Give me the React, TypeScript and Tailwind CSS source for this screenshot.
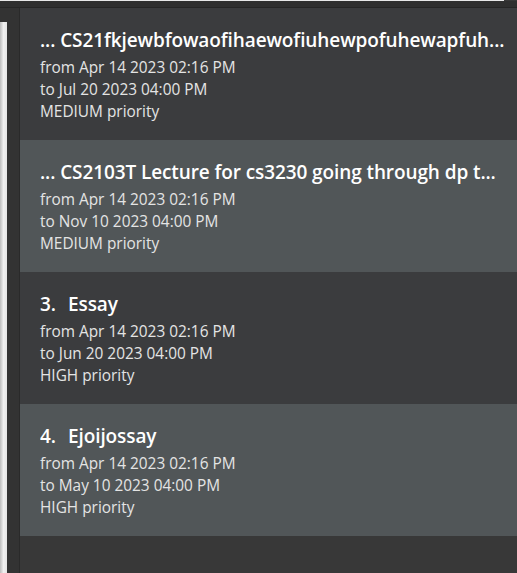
import React from "react";

const cards = [
  { title: "... CS21fkjewbfowaofihaewofiuhewpofuhewapfuh...", from: "from Apr 14 2023 02:16 PM", to: "to Jul 20 2023 04:00 PM", pri: "MEDIUM priority", id: null },
  { title: "... CS2103T Lecture for cs3230 going through dp t...", from: "from Apr 14 2023 02:16 PM", to: "to Nov 10 2023 04:00 PM", pri: "MEDIUM priority", id: null },
  { title: "Essay", from: "from Apr 14 2023 02:16 PM", to: "to Jun 20 2023 04:00 PM", pri: "HIGH priority", id: "3." },
  { title: "Ejoijossay", from: "from Apr 14 2023 02:16 PM", to: "to May 10 2023 04:00 PM", pri: "HIGH priority", id: "4." },
];

export default function App() {
  return (
    <div className="w-[517px] h-[573px] bg-[#383838] flex flex-col overflow-hidden" style={{ fontFamily: '"Open Sans", sans-serif' }}>
      <div className="h-px w-[504px] bg-[#e8e8e8]" />
      <div className="h-[6px] bg-[#2f2f2f]" />
      <div className="h-px bg-[#262626]" />
      <div className="flex flex-1 min-h-0">
        <div className="w-[19px] bg-[#333333] flex flex-col">
          <div className="h-[14px]" />
          <div className="w-[7px] flex-1 bg-gradient-to-r from-[#bdbdbd] via-[#f0f0f0] to-[#e6e6e6]" />
        </div>
        <div className="w-px bg-[#2a2a2a]" />
        <div className="flex-1 flex flex-col">
          {cards.map((c, i) => (
            <div
              key={i}
              className={`h-[132px] pl-[20px] pr-[10px] pt-[19px] ${i % 2 === 0 ? "bg-[#3b3c3e]" : "bg-[#515658]"}`}
            >
              <div className="flex items-baseline text-[19px] leading-[26px] font-semibold text-white whitespace-nowrap overflow-hidden tracking-[-0.1px]">
                {c.id && <span className="w-[28px]">{c.id}</span>}
                <span>{c.title}</span>
              </div>
              <div className="text-[15.4px] leading-[22px] text-[#e4e4e4] mt-[4px]">
                <div>{c.from}</div>
                <div>{c.to}</div>
                <div>{c.pri}</div>
              </div>
            </div>
          ))}
        </div>
      </div>
    </div>
  );
}
